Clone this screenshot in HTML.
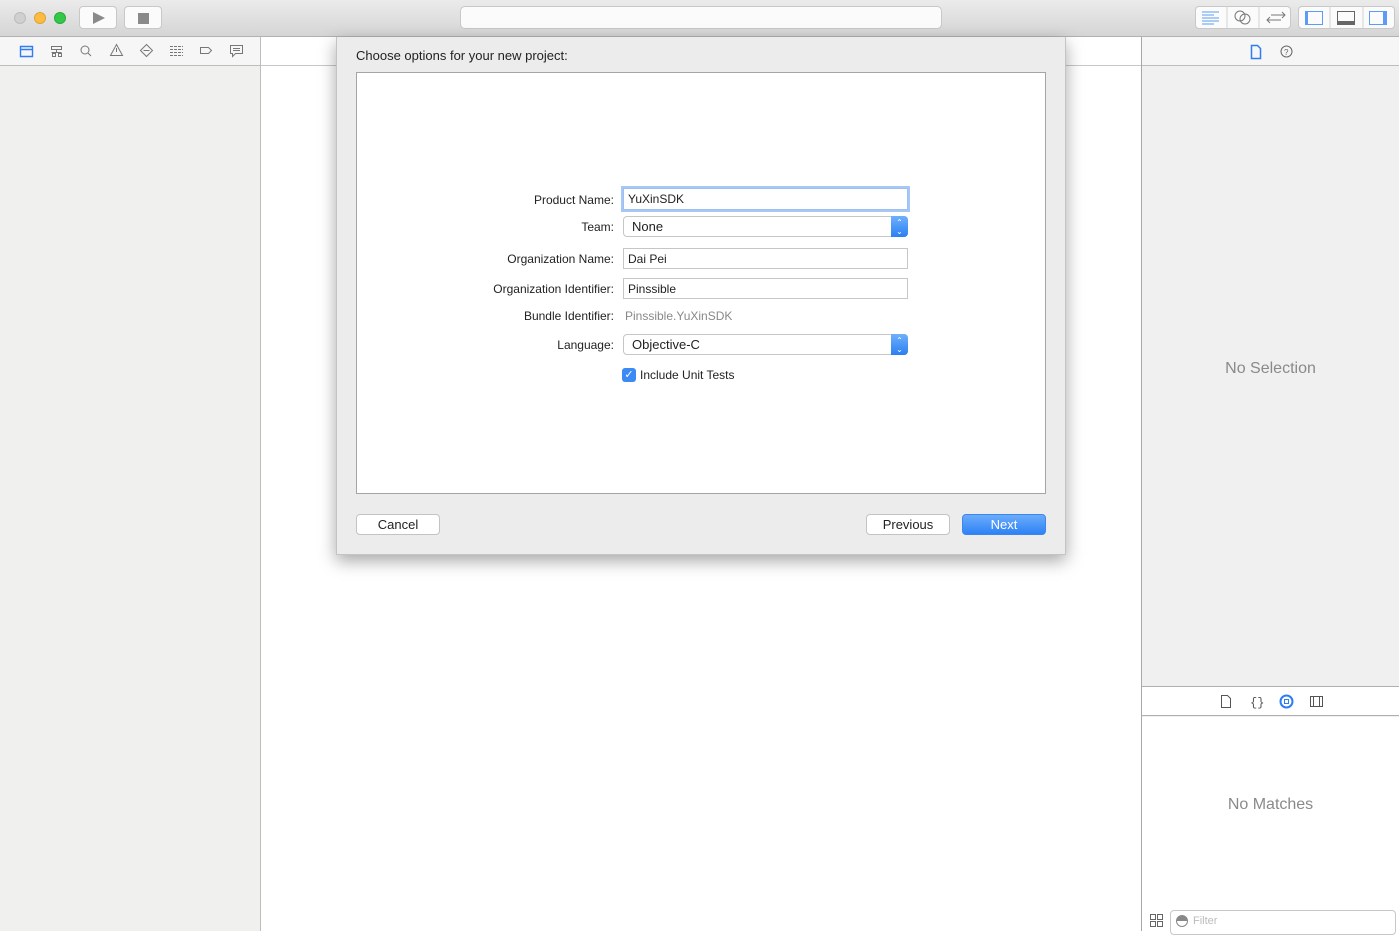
<!DOCTYPE html>
<html><head><style>
*{box-sizing:border-box;margin:0;padding:0}
body{width:1399px;height:931px;overflow:hidden;font-family:"Liberation Sans",sans-serif;font-size:12px;color:#222;background:#fff;position:relative}
.abs{position:absolute}
.tb{left:0;top:0;width:1399px;height:37px;background:linear-gradient(#ebebeb,#d5d5d5);border-bottom:1px solid #b1b1b1}
.dot{top:12px;width:12px;height:12px;border-radius:50%}
.btn{background:#fbfbfb;border:1px solid #c8c8c8;border-radius:4px}
.nav{left:0;top:37px;width:261px;height:894px;background:#f0f0ef;border-right:1px solid #bdbdbd}
.navbar{left:0;top:37px;width:261px;height:29px;background:#f6f6f6;border-bottom:1px solid #bdbdbd;border-right:1px solid #bdbdbd}
.right{left:1141px;top:37px;width:258px;height:894px;background:#f0f0f0;border-left:1px solid #a8a8a8}
.lbl{position:absolute;right:785px;width:200px;text-align:right;font-size:12px}
.field{position:absolute;left:623px;width:285px;height:21px;border:1px solid #c6c6c6;background:#fff;padding:3px 4px;font-size:12px}
.pop{position:absolute;left:623px;width:285px;height:21px;border:1px solid #c6c6c6;border-radius:4px;background:#fff;padding:2px 8px;font-size:13px}
.pop i{position:absolute;right:-1px;top:-1px;width:17px;height:21px;background:linear-gradient(#6fb0fb,#2a7ff3);border-radius:0 4px 4px 0;color:#fff;font-style:normal;font-size:8px;line-height:9px;text-align:center;padding-top:2px}
.dbtn{position:absolute;top:514px;height:21px;border:1px solid #c3c3c3;border-radius:4px;background:#fff;text-align:center;font-size:13px;line-height:19px}
</style></head><body>
<div class="abs tb"></div>
<div class="abs dot" style="left:14px;background:#d0d0d0;border:1px solid #bcbcbc"></div>
<div class="abs dot" style="left:34px;background:#fdbc40;border:1px solid #dea236"></div>
<div class="abs dot" style="left:54px;background:#34c84a;border:1px solid #27aa35"></div>
<div class="abs btn" style="left:79px;top:6px;width:38px;height:23px"><div style="position:absolute;left:13px;top:5px;border-left:12px solid #8a8a8a;border-top:6.5px solid transparent;border-bottom:6.5px solid transparent"></div></div>
<div class="abs btn" style="left:124px;top:6px;width:38px;height:23px"><div style="position:absolute;left:13px;top:6px;width:11px;height:11px;background:#8a8a8a"></div></div>
<div class="abs btn" style="left:460px;top:6px;width:482px;height:23px;border-radius:5px"></div>
<div class="abs btn" style="left:1195px;top:6px;width:96px;height:23px"></div>
<div class="abs btn" style="left:1298px;top:6px;width:97px;height:23px"></div>
<svg class="abs" style="left:1195px;top:6px" width="200" height="23" fill="none" stroke-width="1">
<path d="M7 6h17M7 9h12M7 12h17M7 15h17M7 18h12" stroke="#5c9cf6"/>
<line x1="32" y1="0" x2="32" y2="23" stroke="#d0d0d0"/><line x1="64" y1="0" x2="64" y2="23" stroke="#d0d0d0"/>
<circle cx="45" cy="10" r="5" stroke="#777"/><circle cx="50" cy="13" r="5" stroke="#777"/>
<path d="M72 14h14M75 11l-3 3 3 3M76 9h14M87 6l3 3-3 3" stroke="#777"/>
<line x1="135" y1="0" x2="135" y2="23" stroke="#d0d0d0"/><line x1="168" y1="0" x2="168" y2="23" stroke="#d0d0d0"/>
<rect x="110.5" y="5.5" width="17" height="13" stroke="#5c9cf6"/><rect x="111" y="6" width="2" height="12" fill="#5c9cf6"/>
<rect x="142.5" y="5.5" width="17" height="13" stroke="#666"/><rect x="143" y="15" width="16" height="3" fill="#666"/>
<rect x="174.5" y="5.5" width="17" height="13" stroke="#5c9cf6"/><rect x="188" y="6" width="3" height="12" fill="#5c9cf6"/>
</svg>
<div class="abs nav"></div>
<div class="abs navbar"></div>
<svg class="abs" style="left:0;top:37px" width="340" height="28" fill="none" stroke="#777">
<path d="M20.5 9.5h12v10h-12zM20.5 12.5h12" stroke="#2f7cf6" stroke-width="1.4"/>
<path d="M51.5 9.5h10v3h-10zM56.5 12.5v3M51.5 15.5h10M52.5 16.5v3h3v-3zM58.5 16.5v3h3v-3z"/>
<circle cx="85" cy="13" r="4"/><path d="M88 16l3 3"/>
<path d="M116.5 7.5l6 11h-12z M116.5 11v4"/>
<path d="M146.5 7.5l6 6-6 6-6-6z M143.5 13.5h6"/>
<path d="M170 9.5h13M170 12.5h13M170 15.5h13M170 18.5h13" stroke-dasharray="3 1"/>
<path d="M200.5 10.5h8l3 3-3 3h-8z"/>
<path d="M230.5 8.5h12v8h-7l-3 3v-3h-2z M233 11.5h7M233 13.5h7"/>
<path d="M269.5 8.5h4v4h-4zM276.5 8.5h4v4h-4zM269.5 15.5h4v4h-4zM276.5 15.5h4v4h-4z"/>
<path d="M302 9l-4 5 4 5M320 9l4 5-4 5" stroke="#aaa"/>
</svg>
<div class="abs" style="left:261px;top:37px;width:880px;height:29px;border-bottom:1px solid #c8c8c8;background:#fff"></div>
<div class="abs right"></div>
<div class="abs" style="left:1142px;top:37px;width:257px;height:29px;background:#f6f6f6;border-bottom:1px solid #bdbdbd"></div>
<svg class="abs" style="left:1242px;top:42px" width="60" height="20" fill="none">
<path d="M9.5 3.5h6l3 3v10h-9z" stroke="#2f7cf6" stroke-width="1.5"/>
<circle cx="44.5" cy="9.5" r="5.5" stroke="#666"/><text x="42" y="13" font-size="8" fill="#666" font-family="Liberation Sans">?</text>
</svg>
<div class="abs" style="left:1142px;top:360px;width:257px;text-align:center;font-size:16px;color:#8a8a8a">No Selection</div>
<div class="abs" style="left:1142px;top:686px;width:257px;height:30px;background:#fff;border-top:1px solid #b0b0b0;border-bottom:1px solid #b0b0b0"></div>
<svg class="abs" style="left:1210px;top:690px" width="120" height="22" fill="none" stroke="#555">
<path d="M11.5 5.5h6l3 3v9h-9z"/>
<text x="40" y="16" font-size="12" fill="#555" stroke="none" font-family="Liberation Mono">{}</text>
<circle cx="76.5" cy="11.5" r="6" stroke="#2f7cf6" stroke-width="2"/><rect x="74.5" y="9.5" width="4" height="4" stroke="#2f7cf6"/>
<path d="M100.5 6.5h12v10h-12zM103.5 6.5v10M109.5 6.5v10"/>
</svg>
<div class="abs" style="left:1142px;top:717px;width:257px;height:214px;background:#fff"></div>
<div class="abs" style="left:1142px;top:796px;width:257px;text-align:center;font-size:16px;color:#8a8a8a">No Matches</div>
<svg class="abs" style="left:1150px;top:914px" width="14" height="14" fill="none" stroke="#666"><path d="M.5.5h5v5h-5zM7.5.5h5v5h-5zM.5 7.5h5v5h-5zM7.5 7.5h5v5h-5z"/></svg>
<div class="abs" style="left:1170px;top:910px;width:226px;height:25px;border:1px solid #c8c8c8;border-radius:4px;background:#fff;font-size:11px;color:#bbb;padding:4px 0 0 22px">Filter</div>
<div class="abs" style="left:1176px;top:915px;width:12px;height:12px;border:1px solid #888;border-radius:50%;background:linear-gradient(#888 50%,#fff 50%)"></div>

<div class="abs" style="left:336px;top:37px;width:730px;height:518px;background:#ececec;box-shadow:0 6px 16px rgba(0,0,0,.35);border:1px solid #c4c4c4;border-top:none"></div>
<div class="abs" style="left:356px;top:48px;font-size:13px">Choose options for your new project:</div>
<div class="abs" style="left:356px;top:72px;width:690px;height:422px;background:#fff;border:1px solid #a5a5a5"></div>
<div class="lbl" style="top:193px">Product Name:</div>
<div class="lbl" style="top:220px">Team:</div>
<div class="lbl" style="top:252px">Organization Name:</div>
<div class="lbl" style="top:282px">Organization Identifier:</div>
<div class="lbl" style="top:309px">Bundle Identifier:</div>
<div class="lbl" style="top:338px">Language:</div>
<div class="field" style="top:188px;height:22px;border:1px solid #9fbff0;box-shadow:0 0 0 2px #a7c8f7">YuXinSDK</div>
<div class="pop" style="top:216px">None<i>⌃<br>⌄</i></div>
<div class="field" style="top:248px">Dai Pei</div>
<div class="field" style="top:278px">Pinssible</div>
<div class="abs" style="left:625px;top:309px;color:#888">Pinssible.YuXinSDK</div>
<div class="pop" style="top:334px">Objective-C<i>⌃<br>⌄</i></div>
<div class="abs" style="left:622px;top:368px;width:14px;height:14px;border-radius:3px;background:#3b8af6;color:#fff;font-size:11px;line-height:14px;text-align:center">✓</div>
<div class="abs" style="left:640px;top:368px">Include Unit Tests</div>
<div class="dbtn" style="left:356px;width:84px">Cancel</div>
<div class="dbtn" style="left:866px;width:84px">Previous</div>
<div class="dbtn" style="left:962px;width:84px;background:linear-gradient(#6cacfb,#2d82f6);border-color:#3d86ee;color:#fff">Next</div>
</body></html>
